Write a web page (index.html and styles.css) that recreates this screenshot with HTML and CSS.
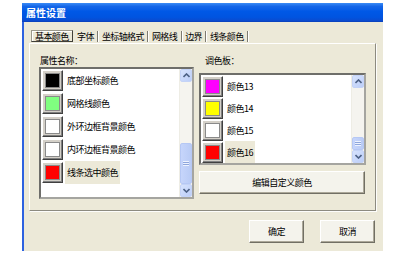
FILE: index.html
```html
<!DOCTYPE html>
<html>
<head>
<meta charset="utf-8">
<link rel="stylesheet" href="styles.css">
</head>
<body>
<div class="window">
  <div class="titlebar"><span class="title">属性设置</span></div>
  <div class="client">
    <div class="tabs">
      <span class="tab active">基本颜色</span>
      <span class="tab">字体</span>
      <span class="tab">坐标轴格式</span>
      <span class="tab">网格线</span>
      <span class="tab">边界</span>
      <span class="tab">线条颜色</span>
    </div>
    <div class="page">
      <div class="col col-left">
        <div class="label">属性名称：</div>
        <div class="list list-left">
          <div class="items items-left">
            <div class="item"><span class="sw"><i class="c-black"></i></span><span class="txt">底部坐标颜色</span></div>
            <div class="item"><span class="sw"><i class="c-green"></i></span><span class="txt">网格线颜色</span></div>
            <div class="item"><span class="sw"><i class="c-white"></i></span><span class="txt">外环边框背景颜色</span></div>
            <div class="item"><span class="sw"><i class="c-white"></i></span><span class="txt">内环边框背景颜色</span></div>
            <div class="item"><span class="sw"><i class="c-red"></i></span><span class="txt sel">线条选中颜色</span></div>
          </div>
          <div class="scroll">
            <div class="sbtn"><svg width="7" height="5" viewBox="0 0 7 5"><path d="M0.5 4 L3.5 1 L6.5 4" fill="none" stroke="#4d6185" stroke-width="1.6"/></svg></div>
            <div class="track"></div>
            <div class="thumb thumb-left"><span class="grip"></span></div>
            <div class="sbtn"><svg width="7" height="5" viewBox="0 0 7 5"><path d="M0.5 1 L3.5 4 L6.5 1" fill="none" stroke="#4d6185" stroke-width="1.6"/></svg></div>
          </div>
        </div>
      </div>
      <div class="col col-right">
        <div class="label">调色板：</div>
        <div class="list list-right">
          <div class="items items-right">
            <div class="item"><span class="sw"><i class="c-magenta"></i></span><span class="txt">颜色13</span></div>
            <div class="item"><span class="sw"><i class="c-yellow"></i></span><span class="txt">颜色14</span></div>
            <div class="item"><span class="sw"><i class="c-white"></i></span><span class="txt">颜色15</span></div>
            <div class="item"><span class="sw"><i class="c-red"></i></span><span class="txt sel">颜色16</span></div>
          </div>
          <div class="scroll">
            <div class="sbtn"><svg width="7" height="5" viewBox="0 0 7 5"><path d="M0.5 4 L3.5 1 L6.5 4" fill="none" stroke="#4d6185" stroke-width="1.6"/></svg></div>
            <div class="track"></div>
            <div class="thumb thumb-right"><span class="grip"></span></div>
            <div class="sbtn"><svg width="7" height="5" viewBox="0 0 7 5"><path d="M0.5 1 L3.5 4 L6.5 1" fill="none" stroke="#4d6185" stroke-width="1.6"/></svg></div>
          </div>
        </div>
        <button class="btn btn-wide">编辑自定义颜色</button>
      </div>
    </div>
    <div class="buttons">
      <button class="btn btn-dlg">确定</button>
      <button class="btn btn-dlg">取消</button>
    </div>
  </div>
</div>
</body>
</html>
```
FILE: styles.css
```css
* { box-sizing: border-box; }
html, body { margin: 0; padding: 0; background: #fff; }
body {
  width: 402px; height: 261px; overflow: hidden;
  font-family: "Noto Sans CJK SC", "Liberation Sans", sans-serif;
  font-size: 9px; color: #000;
}
.window {
  margin: 3px 0 0 22px;
  width: 361px; height: 248px;
  background: #ece9d8;
  display: flex; flex-direction: column;
}
.titlebar {
  height: 19px; flex: none;
  background: linear-gradient(#3b8bf5 0%, #1466e8 18%, #0058e6 45%, #0054e0 75%, #0a4bd0 92%, #0a3fb8 100%);
  display: flex; align-items: center;
  padding-left: 4px;
}
.title { color: #fff; font-weight: bold; font-size: 10px; letter-spacing: 0; line-height: 1; }
.client {
  flex: 1;
  border-left: 2px solid #2d62e0;
  display: flex; flex-direction: column;
  padding-right: 7px;
}
.tabs {
  margin: 7px 0 0 7px;
  height: 14px;
  display: flex; align-items: center;
  letter-spacing: -0.6px;
  line-height: 11px;
}
.tab {
  padding: 0 3.5px;
  border-right: 1px solid #7d7b70;
  box-shadow: 1px 0 0 #fff;
  height: 11px;
}
.tab.active {
  height: 12px;
  padding: 0 3px;
  border: 1px solid #716f64;
  border-color: #9b998c #403f38 #403f38 #9b998c;
  box-shadow: inset 1px 1px 0 #fff;
  margin-right: 1px;
}
.page {
  margin-left: 5px;
  height: 168px;
  border: 1px solid #fff;
  border-right-color: #8d8b80;
  border-bottom-color: #8d8b80;
  box-shadow: 1px 1px 0 #fdfdfb;
  display: flex; gap: 5px;
  padding: 11px 9px 0 9px;
}
.col { display: flex; flex-direction: column; }
.col-left { width: 155px; }
.col-right { width: 167px; }
.label { height: 11px; line-height: 11px; padding-left: 1px; letter-spacing: -0.5px; }
.col-right .label { padding-left: 6px; }
.list {
  background: #fff;
  border: 2px solid #7b7b78;
  border-color: #6e6e6a #a5a5a0 #a5a5a0 #6e6e6a;
  display: flex;
}
.list-left { margin-top: 1px; height: 132px; }
.list-right { margin-top: 7px; height: 92px; }
.items { flex: 1; display: flex; flex-direction: column; padding-left: 1px; }
.items-left .item { height: 23px; }
.items-right .item { height: 22px; }
.item { display: flex; align-items: center; letter-spacing: -0.5px; }
.sw {
  width: 21px; height: 21px; flex: none;
  background: #d4d0c8;
  border: 1px solid;
  border-color: #fff #404040 #404040 #fff;
  box-shadow: inset -1px -1px 0 #808080;
  display: flex; align-items: center; justify-content: center;
}
.sw i {
  display: block; width: 15px; height: 15px;
  border: 1px solid #8a8a8a;
}
.c-black { background: #000; }
.c-green { background: #80ff80; }
.c-white { background: #fff; }
.c-red { background: #ff0000; }
.c-magenta { background: #ff00ff; }
.c-yellow { background: #ffff00; }
.txt {
  margin-left: 2px; padding: 0 2px;
  height: 100%; display: flex; align-items: center;
}
.txt.sel { background: #ece9d8; }
.scroll {
  width: 13px; flex: none;
  background: #f5f4ef;
  border-left: 1px solid #eeede5;
  display: flex; flex-direction: column;
}
.sbtn {
  height: 13px; flex: none;
  background: linear-gradient(135deg, #d7e3fd, #bccef8);
  border: 1px solid #c4d3f7;
  border-radius: 2px;
  display: flex; align-items: center; justify-content: center;
}
.track { flex: 1; }
.thumb {
  flex: none;
  background: linear-gradient(90deg, #c6d5fb, #b9cbf5);
  border: 1px solid #b6c8f4;
  border-radius: 2px;
  display: flex; align-items: center; justify-content: center;
}
.thumb-left { height: 41px; }
.thumb-right { height: 13px; }
.grip {
  width: 6px; height: 5px;
  background: repeating-linear-gradient(#eef3fe 0 1px, #8ea6dc 1px 2px);
}
.btn {
  font-family: "Noto Sans CJK SC", "Liberation Sans", sans-serif;
  font-size: 9px; letter-spacing: -0.5px;
  background: #f4f3ec;
  border: 1px solid;
  border-color: #fff #716f64 #716f64 #fff;
  box-shadow: inset -1px -1px 0 #aca899;
  padding: 0; margin: 0; color: #000;
  display: flex; align-items: center; justify-content: center;
}
.btn-wide { margin-top: 6px; height: 23px; width: 166px; }
.buttons {
  margin-top: 9px;
  display: flex; justify-content: flex-end; gap: 16px;
  padding-right: 1px;
}
.btn-dlg { width: 55px; height: 23px; }
```
